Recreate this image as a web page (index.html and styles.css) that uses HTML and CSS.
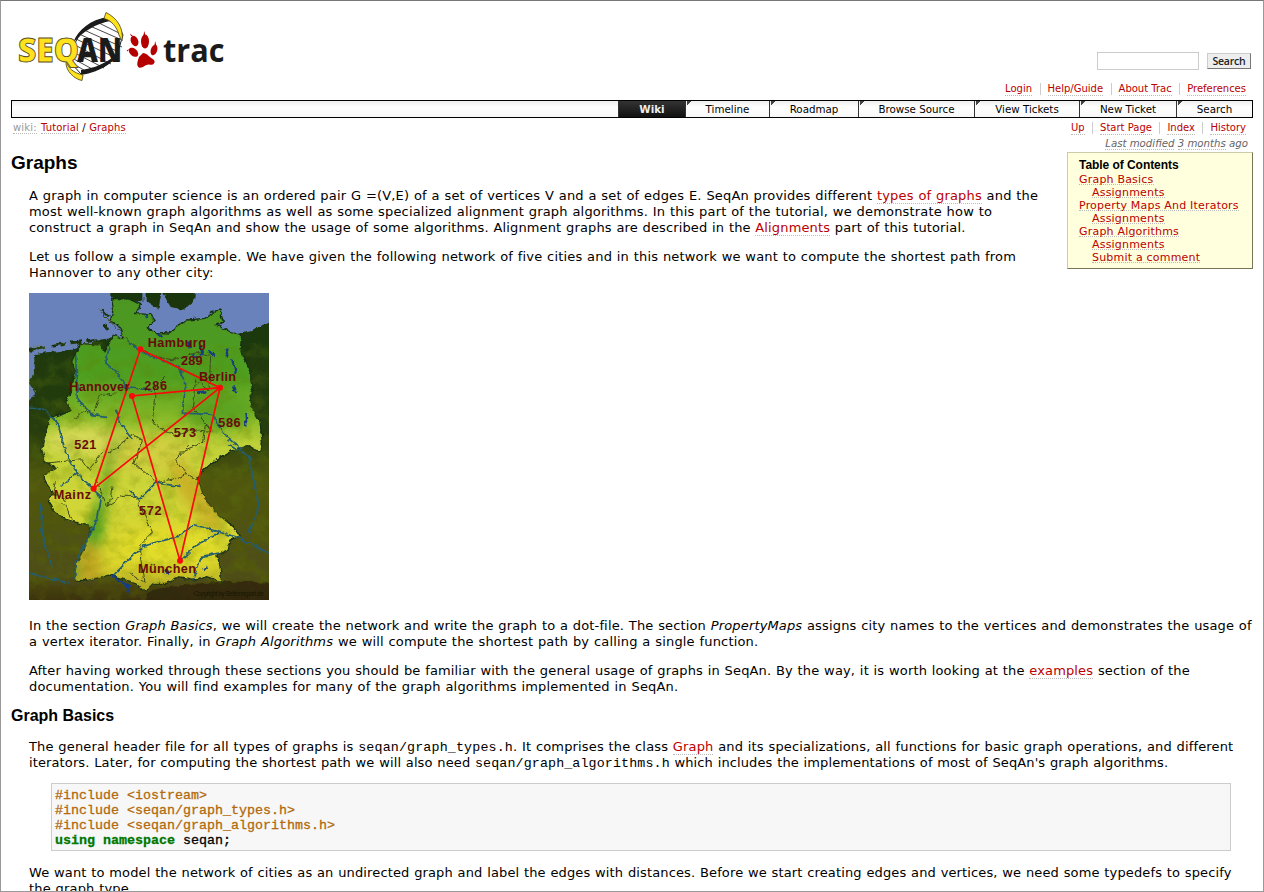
FILE: index.html
```html
<!DOCTYPE html>
<html lang="en">
<head>
<meta charset="utf-8">
<title>Tutorial/Graphs – SeqAn</title>
<link rel="stylesheet" href="styles.css">
</head>
<body>
<div class="page">
<header class="banner">
  <svg class="logo" width="226" height="76" viewBox="10 8 226 76" role="img" aria-label="SeqAn trac">
    <path d="M105 18C86 25 76 37 73 49L71 63L81 74C98 71 113 63 117 55L123 35L119 27Z" fill="#fff" stroke="#1b1b1b" stroke-width="1"/>
    <g stroke="#1b1b1b" stroke-width=".8"><path d="M97 22l24 12M90 26l32 14M84 30l38 17M79 34l40 18M76 39l40 19M73 44l38 20M71 51l33 17M70 57l26 14M70 62l19 11"/></g>
    <path d="M107 17C91 20 78 29 73 43C83 31 96 24 110 21ZM81 75C98 72 113 65 119 51L112 58C101 66 89 69 81 70Z" fill="#1b1b1b"/>
    <path d="M106 12.5C117 18 124 28 122 41L119 35C117 27 111 20 104 18.500Z" fill="#ffe21c" stroke="#5a5328" stroke-width=".9"/>
    <path d="M67 61C67 68 74 73 83 75L82 80.500C74 79 66 71 66 63Z" fill="#ffe21c" stroke="#5a5328" stroke-width=".9"/>
    <text x="18" y="61.500" class="word seq" textLength="61" lengthAdjust="spacingAndGlyphs">SEQ</text>
    <text x="77" y="61.500" class="word an" textLength="45" lengthAdjust="spacingAndGlyphs">AN</text>
    <g fill="#b50000">
      <path d="M143 53C147 53 149 57 152 58.500C157 61 154 65.500 150 64.800C146 63.500 144 68 139.500 67.800C135.500 66 138 60 139 57Z"/>
      <ellipse cx="134.500" cy="41" rx="3.600" ry="5.400" transform="rotate(-23 134.500 41)"/><ellipse cx="145" cy="41.500" rx="4" ry="7"/><ellipse cx="154" cy="50" rx="3.200" ry="5.400" transform="rotate(18 154 50)"/><ellipse cx="133.500" cy="52.300" rx="5.500" ry="3.600" transform="rotate(42 133.500 52.300)"/>
      <path d="M143.300 36l1-5 1.300 5zM131 36l-1-2.500 3.500 3zM154.500 45l.6-4 1.300 5zM129 49l-2.300 1.500 1 1z"/>
    </g>
    <text x="163" y="61.500" class="word trac" textLength="61.500" lengthAdjust="spacingAndGlyphs">trac</text>
  </svg>
  <div class="tools">
    <form class="search"><input class="search-box" type="text" aria-label="Search"><button class="search-btn" type="button">Search</button></form>
    <ul class="links meta"><li><a>Login</a></li><li><a>Help/Guide</a></li><li><a>About Trac</a></li><li><a>Preferences</a></li></ul>
  </div>
</header>
<nav class="mainnav"><span class="blank"></span><a class="active">Wiki</a><a>Timeline</a><a>Roadmap</a><a>Browse Source</a><a>View Tickets</a><a>New Ticket</a><a>Search</a></nav>
<div class="context">
  <div class="crumbs"><a class="first">wiki:</a> <a>Tutorial</a> / <a>Graphs</a></div>
  <ul class="links ctx"><li><a>Up</a></li><li><a>Start Page</a></li><li><a>Index</a></li><li><a>History</a></li></ul>
</div>
<div class="modified"><a>Last modified</a> <a>3 months</a> ago</div>
<main class="wiki">
  <div class="intro">
    <div class="lead">
      <h1>Graphs</h1>
      <p><span class="ln">A graph in computer science is an ordered pair G =(V,E) of a set of vertices V and a set of edges E. SeqAn provides different <a>types of graphs</a> and the</span>
      <span class="ln wide">most well-known graph algorithms as well as some specialized alignment graph algorithms. In this part of the tutorial, we demonstrate how to</span>
      <span class="ln tight">construct a graph in SeqAn and show the usage of some algorithms. Alignment graphs are described in the <a>Alignments</a> part of this tutorial.</span></p>
      <p><span class="ln">Let us follow a simple example. We have given the following network of five cities and in this network we want to compute the shortest path from</span>
      <span class="ln">Hannover to any other city:</span></p>
    </div>
    <aside class="toc">
      <h4>Table of Contents</h4>
      <ol><li><a>Graph Basics</a></li><li class="sub"><a>Assignments</a></li><li><a>Property Maps And Iterators</a></li><li class="sub"><a>Assignments</a></li><li><a>Graph Algorithms</a></li><li class="sub"><a>Assignments</a></li><li class="sub"><a>Submit a comment</a></li></ol>
    </aside>
  </div>
  <svg class="map" width="240" height="307" viewBox="0 0 720 921" preserveAspectRatio="none" role="img" aria-label="Road network of five German cities">
    <defs>
      <linearGradient id="land" x1="0" y1="0" x2="0" y2="1"><stop offset="0" stop-color="#4c9620"/><stop offset=".27" stop-color="#4f9f20"/><stop offset=".4" stop-color="#84b828"/><stop offset=".5" stop-color="#bfd138"/><stop offset=".68" stop-color="#d0d638"/><stop offset=".9" stop-color="#dbd52c"/><stop offset="1" stop-color="#b4a924"/></linearGradient>
      <linearGradient id="outer" x1="0" y1="0" x2="0" y2="1"><stop offset="0" stop-color="#183408"/><stop offset=".45" stop-color="#273d0c"/><stop offset=".6" stop-color="#50570f"/><stop offset=".9" stop-color="#4e4e15"/><stop offset="1" stop-color="#352709"/></linearGradient>
      <filter id="rough" x="-5%" y="-5%" width="110%" height="110%"><feTurbulence type="fractalNoise" baseFrequency=".05" numOctaves="3" seed="4"/><feDisplacementMap in="SourceGraphic" scale="16" xChannelSelector="R" yChannelSelector="G"/></filter>
      <filter id="relief" x="0" y="0" width="100%" height="100%"><feTurbulence type="fractalNoise" baseFrequency=".018 .025" numOctaves="5" seed="9"/><feColorMatrix values="0 0 0 0 .12  0 0 0 0 .2  0 0 0 0 0  2.2 0 0 0 -.95"/></filter>
      <filter id="soft"><feGaussianBlur stdDeviation="18"/></filter>
      <clipPath id="de"><path id="border" d="M248 16L300 18L335 35L320 62L365 65L378 82L358 101L373 118L420 120L445 100L475 81L528 76L550 58L573 54L583 86L563 97L605 117L638 128L633 176L663 236L673 286L663 306L668 346L693 386L700 450L690 474L661 458L610 473L570 496L533 521L503 551L518 591L523 616L563 661L613 701L633 731L603 741L598 771L563 786L573 821L578 866L533 851L500 861L450 851L413 871L373 871L348 896L323 871L273 856L243 846L173 861L138 861L138 831L163 771L188 701L133 686L103 676L73 651L58 626L73 601L48 566L43 546L83 526L48 506L38 471L45 440L62 374L123 354L113 326L128 286L138 236L128 206L153 151L213 156L228 176L253 126L283 136L268 96L243 86L253 51Z"/></clipPath>
    </defs>
    <rect width="720" height="921" fill="#6a82bc"/>
    <g filter="url(#rough)">
      <path d="M-30 370L18 300L0 270L18 235L15 184L55 178L128 170L210 140L300 130L600 130L630 122L665 115L750 70V950H-30ZM240-30H340V28L300 25L245 12ZM350-20H400L388 50L350 25ZM400 0L500-20L495 25L462 50L425 42Z" fill="url(#outer)"/>
      <path d="M0 172L50 163M65 160L110 154M125 150L160 146M172 143L200 139M225 90L237 111M220 50L240 70" stroke="#1c330d" stroke-width="8"/>
      <use href="#border" fill="url(#land)" stroke="#183014" stroke-width="4"/>
      <g clip-path="url(#de)">
        <g filter="url(#soft)"><ellipse cx="170" cy="445" rx="125" ry="42" fill="#d7d957"/><ellipse cx="350" cy="480" rx="150" ry="60" fill="#d7cf45" opacity=".7"/><ellipse cx="565" cy="350" rx="105" ry="60" fill="#5da420"/><path d="M185 860L215 700L230 570L260 430L225 600L175 740L125 850Z" fill="#499e21" stroke="#499e21" stroke-width="20"/><ellipse cx="180" cy="820" rx="35" ry="70" fill="#c0a522"/><ellipse cx="500" cy="610" rx="35" ry="130" transform="rotate(-35 500 610)" fill="#c9b128"/><ellipse cx="420" cy="760" rx="150" ry="60" fill="#e2dc29"/></g>
      </g>
      <rect width="720" height="870" y="150" filter="url(#relief)" opacity=".35"/>
      <g fill="none" stroke="#3c4d1a" stroke-width="3"><path d="M130 380L170 350L190 365L215 305L260 300M210 50L300 145L370 190L430 200L500 180L545 190L540 290L500 260L490 345L530 390L550 415L490 410L440 430L370 390L380 280L410 250M240 480L310 425L340 440L315 510L385 570L475 545L500 560M50 510L160 500L180 530L230 465M110 620L70 600L80 565M130 680L100 625M200 560L235 640L280 610L320 610L370 720L330 760L345 870L300 840M250 580L240 635M480 455L440 500L475 545M530 390L520 450L470 470"/></g>
      <g fill="none" stroke="#245d70" stroke-width="5"><path d="M0 345L45 350L85 390L110 480L155 555L215 610L200 690L145 790L135 860M140 185L145 320L190 365L235 370M240 165L230 210L270 245L290 285L370 290M295 145L345 180L450 220L470 270L460 360L550 365L590 430L640 470M260 350L280 400L310 440M300 590L330 620L380 570L455 580M245 855L340 760L450 730L495 695L630 735M455 800L510 750L570 720M95 580L150 535M490 860L520 790L570 780"/><path d="M600 455L660 490L690 640L660 720M35 630L40 730L70 820M630 735L720 780M0 840L120 870"/></g>
      <g fill="none" stroke="#143c80" stroke-width="7"><path d="M475 145l8 20M515 160l6 30M540 175l20 15M490 185l15 8M590 170l7 20M610 200l10 40M505 300l30-6M615 280l8 20M350 65l5 10M390 120l7 9M650 360l2 40M250 850L300 880L295 900M410 825l8 20M525 830l10-10"/></g>
      <path d="M350 900Q500 855 740 870V950H350Z" fill="#302508" opacity=".8"/>
    </g>
    <g fill="none" stroke="#f90909" stroke-width="5"><path d="M334 169L573 284L309 309L453 803L573 284L194 587Z"/></g>
    <g fill="#f90909"><circle cx="334" cy="169" r="9"/><circle cx="309" cy="309" r="9"/><circle cx="573" cy="284" r="9"/><circle cx="194" cy="587" r="9"/><circle cx="453" cy="803" r="9"/></g>
    <g class="map-labels"><text x="356" y="162" textLength="175">Hamburg</text><text x="456" y="217" textLength="65">289</text><text x="510" y="264" textLength="111">Berlin</text><text x="121" y="294" textLength="180">Hannover</text><text x="346" y="290" textLength="68">286</text><text x="568" y="403" textLength="67">586</text><text x="434" y="433" textLength="67">573</text><text x="136" y="468" textLength="66">521</text><text x="74" y="619" textLength="112">Mainz</text><text x="330" y="667" textLength="68">572</text><text x="327" y="840" textLength="174">München</text></g>
    <text x="494" y="909" class="copyright" textLength="210">Copyright by Bettenreport.de</text>
  </svg>
  <p class="body"><span class="ln">In the section <em>Graph Basics</em>, we will create the network and write the graph to a dot-file. The section <em>PropertyMaps</em> assigns city names to the vertices and demonstrates the usage of</span>
  <span class="ln wide">a vertex iterator. Finally, in <em>Graph Algorithms</em> we will compute the shortest path by calling a single function.</span></p>
  <p class="body"><span class="ln">After having worked through these sections you should be familiar with the general usage of graphs in SeqAn. By the way, it is worth looking at the <a>examples</a> section of the</span>
  <span class="ln wide">documentation. You will find examples for many of the graph algorithms implemented in SeqAn.</span></p>
  <h2>Graph Basics</h2>
  <p class="body"><span class="ln">The general header file for all types of graphs is <code>seqan/graph_types.h</code>. It comprises the class <a>Graph</a> and its specializations, all functions for basic graph operations, and different</span>
  <span class="ln tighter">iterators. Later, for computing the shortest path we will also need <code>seqan/graph_algorithms.h</code> which includes the implementations of most of SeqAn's graph algorithms.</span></p>
  <pre class="code"><span class="pp">#include &lt;iostream&gt;
#include &lt;seqan/graph_types.h&gt;
#include &lt;seqan/graph_algorithms.h&gt;</span>
<b>using</b> <b>namespace</b> seqan;</pre>
  <p><span class="ln tight">We want to model the network of cities as an undirected graph and label the edges with distances. Before we start creating edges and vertices, we need some typedefs to specify</span>
  <span class="ln">the graph type.</span></p>
</main>
</div>
</body>
</html>
```
FILE: styles.css
```css
* { box-sizing: border-box; }
body { margin: 0; background: #fff; color: #000; font: 13px/16px "DejaVu Sans", sans-serif; }
.page { height: 892px; overflow: hidden; border: 1px solid #999; border-top-color: #777; padding: 0 10px; }
a { color: #b00; border-bottom: 1px dotted #bbb; }
ul, ol { list-style: none; margin: 0; padding: 0; }
.banner { display: flex; justify-content: space-between; height: 99px; }
.logo { margin: 7px 0 0 -1px; }
.word { font: 800 33px "Open Sans", sans-serif; }
.seq { fill: #ffe21c; stroke: #5a5328; stroke-width: .9px; }
.an, .trac { fill: #1b1b1b; }
.trac { font-weight: 700; }
.tools { display: flex; flex-direction: column; align-items: flex-end; padding-top: 51px; }
.search { display: flex; gap: 8px; margin-right: 2px; align-items: center; }
.search-box { width: 102px; height: 18px; border: 1px solid #ccc; padding: 0; }
.search-btn { width: 44px; height: 16px; padding: 0; border: 1px solid; border-color: #ccc #777 #777 #ccc; background: #eee; font: 600 10.5px/13px "Open Sans", sans-serif; letter-spacing: -.2px; color: #222; }
.links { display: flex; font-size: 10px; line-height: 12px; }
.links li { padding: 0 7.500px 0 7px; border-right: 1px solid #ccc; height: 12px; }
.links li:last-child { border-right: 0; padding-right: 7px; }
.links a { display: block; height: 13px; }
.meta { margin-top: 13px; }
.mainnav { display: grid; grid-template-columns: 606px 67px 84px 89px 116px 105px 97px 76px; height: 18px; border: 1px solid #000; background: linear-gradient(#eee, #fff 40%, #f7f7f7); font-size: 10.300px; line-height: 16px; }
.mainnav a { color: #000; text-align: center; border: 0; border-left: 1px solid #333; background: linear-gradient(135deg, #444 3px, transparent 3.500px) 1px 0 / 100% 100% no-repeat; }
.mainnav .active { background: linear-gradient(#333, #111); color: #eee; font-weight: bold; }
.context { display: flex; justify-content: space-between; padding: 4px 0 0 2px; height: 19px; font-size: 10px; line-height: 12px; }
.crumbs { letter-spacing: .15px; }
.crumbs .first { color: #999; margin-right: 1px; }
.modified { text-align: right; font: italic 10.200px/13px "DejaVu Sans", sans-serif; color: #666; padding-right: 5px; height: 15px; }
.modified a { color: #666; }
.intro { display: flex; justify-content: space-between; }
h1, h2, h4 { font-family: "Liberation Sans", Arial, sans-serif; margin: 0; }
h1 { font-size: 19px; line-height: 20px; }
h2 { font-size: 16px; line-height: 20px; margin: -2px 0 13px; }
p { margin: 0 0 13px 18px; letter-spacing: .17px; word-spacing: .44px; }
.body { letter-spacing: .15px; }
.ln { display: block; white-space: nowrap; height: 16px; }
.wide { letter-spacing: .175px; }
.tight { letter-spacing: .135px; }
.tighter { letter-spacing: .12px; }
.lead { width: 1040px; padding-top: 1px; }
.lead h1 { margin-bottom: 15px; }
.toc { width: 186px; height: 117px; padding: 5px 0 0 11px; border: 1px solid; border-color: #cca #775 #775 #cca; background: #ffd; font-size: 11px; line-height: 13px; white-space: nowrap; letter-spacing: .2px; }
.toc h4 { font-size: 12px; line-height: 15px; letter-spacing: -.05px; }
.toc a { display: inline-block; height: 12px; line-height: 13px; vertical-align: top; }
.toc li { height: 13px; }
.sub { padding-left: 13px; }
.map { display: block; margin: -1px 0 18px 18px; }
.map-labels { font: bold 38px "Liberation Sans", sans-serif; fill: #680c08; }
.copyright { font: 19px "Liberation Sans", sans-serif; fill: #191504; }
code, pre { font-family: "Liberation Mono", monospace; }
code { font-size: 13.330px; line-height: 1; word-spacing: 0; }
.code { margin: -1px 22px 14px 40px; height: 68px; padding: 4px 3px; border: 1px solid #ccc; background: #f7f7f7; font-size: 13.330px; line-height: 15px; -webkit-text-stroke: .3px; }
.pp { color: #b26a0c; }
.code b { color: #070; }
```
